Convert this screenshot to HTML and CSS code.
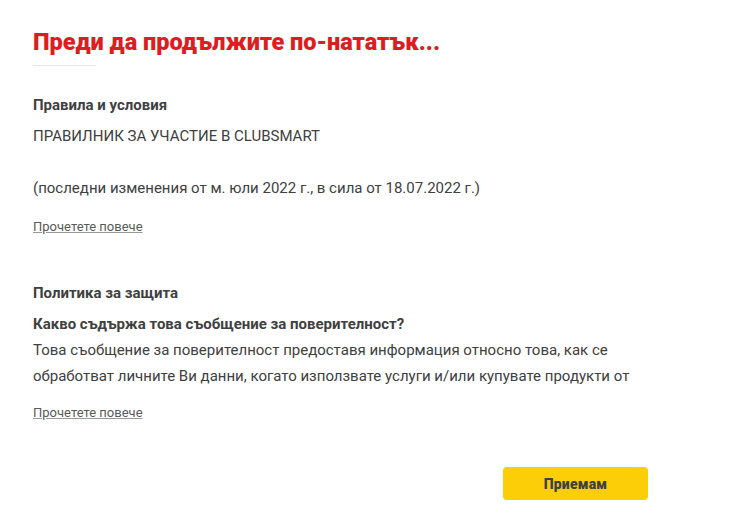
FILE: index.html
```html
<!DOCTYPE html>
<html lang="bg">
<head>
<meta charset="utf-8">
<link rel="stylesheet" href="styles.css">
</head>
<body>
<main class="dialog">
  <h1 class="title">Преди да продължите по-нататък...</h1>
  <hr class="divider">
  <section class="block">
    <h2 class="block-head">Правила и условия</h2>
    <p class="text">ПРАВИЛНИК ЗА УЧАСТИЕ В CLUBSMART</p>
    <p class="text">&nbsp;</p>
    <p class="text">(последни изменения от м. юли 2022 г., в сила от 18.07.2022 г.)</p>
    <a class="more" href="#">Прочетете повече</a>
  </section>
  <section class="block second">
    <h2 class="block-head">Политика за защита</h2>
    <p class="text sub">Какво съдържа това съобщение за поверителност?</p>
    <p class="text">Това съобщение за поверителност предоставя информация относно това, как се обработват личните Ви данни, когато използвате услуги и/или купувате продукти от</p>
    <a class="more more-last" href="#">Прочетете повече</a>
  </section>
  <div class="actions">
    <button class="accept">Приемам</button>
  </div>
</main>
</body>
</html>
```

FILE: styles.css
```css
html, body {
  margin: 0;
  padding: 0;
  background: #fff;
}
body {
  font-family: Roboto, "Liberation Sans", sans-serif;
  color: #404040;
}
.dialog {
  padding: 28px 0 0 33px;
  width: 640px;
}
.title {
  margin: 0;
  font-family: Roboto, sans-serif;
  font-weight: 900;
  font-size: 23.5px;
  line-height: 28px;
  color: #dd1d21;
}
.divider {
  margin: 9px 0 0 0;
  width: 63px;
  border: 0;
  border-top: 1px solid #e6e6e6;
  height: 0;
}
.block {
  margin-top: 29px;
}
.block.second {
  margin-top: 47px;
}
.block-head {
  margin: 0;
  font-size: 15px;
  font-weight: 700;
  line-height: 20px;
  color: #404040;
}
.text {
  margin: 0;
  font-size: 15px;
  line-height: 26px;
}
.block-head + .text {
  margin-top: 8px;
}
.text.sub {
  font-weight: 700;
}
.more {
  display: inline-block;
  margin-top: 17px;
  font-size: 13px;
  line-height: 18px;
  color: #595959;
  text-decoration: underline;
  text-decoration-color: #999;
  text-underline-offset: 1px;
}
.more.more-last {
  margin-top: 15px;
}
.actions {
  display: flex;
  justify-content: flex-end;
  margin-top: 45px;
  padding-right: 25px;
}
.accept {
  width: 145px;
  height: 33px;
  border: 0;
  border-radius: 4px;
  background: #fbce07;
  font-family: Roboto, sans-serif;
  font-weight: 900;
  font-size: 14px;
  letter-spacing: 0.2px;
  color: #404040;
}
```
